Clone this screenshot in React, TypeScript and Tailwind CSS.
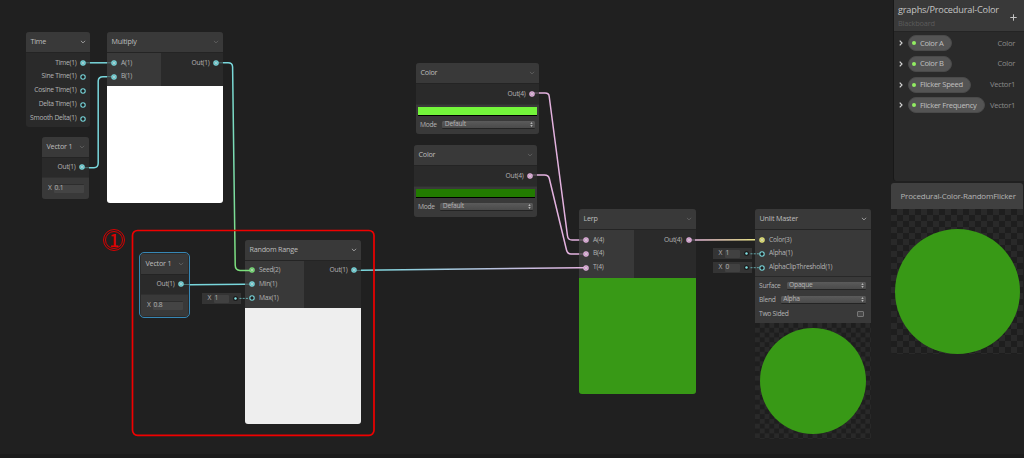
import React from "react";

type PortProps = { color: string; on?: boolean };

function Port({ color, on }: PortProps) {
  return (
    <svg className="h-[6px] w-[6px] shrink-0 overflow-visible" viewBox="0 0 6 6">
      <circle cx="3" cy="3" r="2.2" fill={on ? color : "#1c1c1c"} fillOpacity={on ? 0.75 : 1} stroke={color} strokeWidth="1.1" />
      {on && <circle cx="3" cy="3" r="1" fill="#fff" fillOpacity="0.55" />}
    </svg>
  );
}

function Chevron({ bright }: { bright?: boolean }) {
  return (
    <svg className="mt-[0.5px] h-[4px] w-[6px] shrink-0" viewBox="0 0 6 4" fill="none" stroke={bright ? "#a8a8a8" : "#626262"} strokeWidth="0.9">
      <path d="M0.9 0.8 L3 2.9 L5.1 0.8" />
    </svg>
  );
}

function Header({ title, bright }: { title: string; bright?: boolean }) {
  return (
    <div className="flex h-[21px] shrink-0 items-center justify-between border-b border-[#242424] bg-[#393939] pr-[4px] pl-[4.5px] text-[7.2px] tracking-[-0.22px] text-[#bdbdbd]">
      <span>{title}</span>
      <Chevron bright={bright} />
    </div>
  );
}

function Out({ label, color, on = true }: { label: string; color: string; on?: boolean }) {
  return (
    <div className="flex h-[13.9px] items-center justify-end gap-[3.5px] pr-[4px]">
      <span>{label}</span>
      <Port color={color} on={on} />
    </div>
  );
}

function In({ label, color, on = true }: { label: string; color: string; on?: boolean }) {
  return (
    <div className="flex h-[13.9px] items-center gap-[4.5px] pl-[3.5px]">
      <Port color={color} on={on} />
      <span>{label}</span>
    </div>
  );
}

function Node({ className, children }: { className: string; children: React.ReactNode }) {
  return (
    <div className={`absolute flex flex-col overflow-hidden rounded-[3px] bg-[#2a2a2a] text-[6.7px] leading-none tracking-[-0.26px] whitespace-nowrap text-[#b4b4b4] ${className}`}>
      {children}
    </div>
  );
}

function VectorBody({ value }: { value: string }) {
  return (
    <>
      <div className="flex h-[19px] shrink-0 flex-col justify-center">
        <Out label="Out(1)" color={TEAL} />
      </div>
      <div className="flex flex-1 items-center gap-[2px] border-t border-[#303030] bg-[#393939] pr-[5px] pb-[1px] pl-[6px]">
        <span>X</span>
        <span className="flex h-[9px] flex-1 items-center rounded-[1px] border-t border-[#2d2d2d] bg-[#444444] pl-[1px]">{value}</span>
      </div>
    </>
  );
}

function Select({ label }: { label: string }) {
  return (
    <div className="flex h-[8.5px] flex-1 items-center justify-between rounded-[1.5px] border-b border-[#242424] bg-linear-to-b from-[#5b5b5b] to-[#4a4a4a] pr-[2px] pl-[2.5px]">
      <span>{label}</span>
      <svg className="h-[5px] w-[3px]" viewBox="0 0 3 5" fill="#b8b8b8">
        <path d="M1.5 0 L2.7 2 H0.3 Z M1.5 5 L2.7 3 H0.3 Z" />
      </svg>
    </div>
  );
}

function ColorBody({ swatch }: { swatch: string }) {
  return (
    <>
      <div className="flex h-[20px] shrink-0 flex-col justify-center">
        <Out label="Out(4)" color={PINK} />
      </div>
      <div className="flex flex-1 flex-col border-t border-[#303030] bg-[#393939] px-[2px] pt-[2px]">
        <div className={`h-[9px] shrink-0 border-b-[1.5px] border-black ${swatch}`} />
        <div className="flex h-[18px] items-center gap-[5.5px] pr-[2.5px] pl-[2px]">
          <span>Mode</span>
          <Select label="Default" />
        </div>
      </div>
    </>
  );
}

function Inline({ className, value }: { className: string; value: string }) {
  return (
    <div className={`absolute flex h-[11px] w-[39px] items-center bg-[#343434] pr-[3.5px] pl-[5.5px] text-[6.7px] leading-none text-[#b4b4b4] ${className}`}>
      <span className="w-[6px]">X</span>
      <span className="flex h-[8px] w-[15px] items-center rounded-[1px] bg-[#414141] pl-[1px]">{value}</span>
      <svg className="ml-auto h-[5px] w-[5px]" viewBox="0 0 5 5">
        <circle cx="2.5" cy="2.5" r="2.5" fill="#1b1b1b" />
        <circle cx="2.5" cy="2.5" r="1.2" fill="#84e4e7" />
      </svg>
    </div>
  );
}

function Property({ name, type }: { name: string; type: string }) {
  return (
    <div className="flex h-[20.7px] items-center">
      <svg className="mr-[5px] h-[6px] w-[4px] shrink-0" viewBox="0 0 4 6" fill="none" stroke="#d0d0d0" strokeWidth="1.2">
        <path d="M0.7 0.6 L3 3 L0.7 5.4" />
      </svg>
      <span className="flex h-[16px] items-center gap-[4px] rounded-full border border-[#4a4a4a] bg-[#545454] pr-[7px] pl-[3.5px] text-[#c0c0c0]">
        <span className="h-[4px] w-[4px] rounded-full bg-[#92ee62]" />
        {name}
      </span>
      <span className="ml-auto text-[#8a8a8a]">{type}</span>
    </div>
  );
}

const TEAL = "#79d7dc";
const PINK = "#e3b2df";
const GREEN = "#7ce07c";
const YELLOW = "#e6e67a";

export default function App() {
  return (
    <div className="relative h-[458px] w-[1024px] overflow-hidden bg-[#202020] font-['Open_Sans','Noto_Sans',sans-serif]">
      <Node className="top-[32px] left-[26px] h-[95px] w-[64px]">
        <Header title="Time" bright />
        <div className="pt-[3px]">
          <Out label="Time(1)" color={TEAL} />
          <Out label="Sine Time(1)" color={TEAL} on={false} />
          <Out label="Cosine Time(1)" color={TEAL} on={false} />
          <Out label="Delta Time(1)" color={TEAL} on={false} />
          <Out label="Smooth Delta(1)" color={TEAL} on={false} />
        </div>
      </Node>

      <Node className="top-[32px] left-[107px] h-[171px] w-[116px]">
        <Header title="Multiply" />
        <div className="flex h-[33px] shrink-0">
          <div className="w-[54px] bg-[#393939] pt-[3px]">
            <In label="A(1)" color={TEAL} />
            <In label="B(1)" color={TEAL} />
          </div>
          <div className="flex-1 pt-[3px]"><Out label="Out(1)" color={TEAL} /></div>
        </div>
        <div className="flex-1 bg-white" />
      </Node>

      <Node className="top-[137px] left-[42px] h-[62px] w-[47px]">
        <Header title="Vector 1" />
        <VectorBody value="0.1" />
      </Node>

      <Node className="top-[252px] left-[139px] h-[66px] w-[51px] rounded-[5px]! border-[1.5px] border-[#3787b5] p-[1px]">
        <Header title="Vector 1" />
        <VectorBody value="0.8" />
      </Node>

      <Node className="top-[240px] left-[245px] h-[184px] w-[116px]">
        <Header title="Random Range" bright />
        <div className="flex h-[47px] shrink-0">
          <div className="w-[59px] bg-[#393939] pt-[2.5px]">
            <In label="Seed(2)" color={GREEN} />
            <In label="Min(1)" color={TEAL} />
            <In label="Max(1)" color={TEAL} on={false} />
          </div>
          <div className="flex-1 pt-[2.5px]"><Out label="Out(1)" color={TEAL} /></div>
        </div>
        <div className="flex-1 bg-[#eeeeee]" />
      </Node>

      <Node className="top-[63px] left-[416px] h-[71px] w-[123px]">
        <Header title="Color" />
        <ColorBody swatch="bg-[#74f53b]" />
      </Node>

      <Node className="top-[145px] left-[414px] h-[72px] w-[123px]">
        <Header title="Color" />
        <ColorBody swatch="bg-[#227b00]" />
      </Node>

      <Node className="top-[209px] left-[579px] h-[184.5px] w-[116.5px]">
        <Header title="Lerp" />
        <div className="flex h-[47.5px] shrink-0">
          <div className="w-[55px] bg-[#393939] pt-[3px]">
            <In label="A(4)" color={PINK} />
            <In label="B(4)" color={PINK} />
            <In label="T(4)" color={PINK} />
          </div>
          <div className="flex-1 pt-[3px]"><Out label="Out(4)" color={PINK} /></div>
        </div>
        <div className="flex-1 bg-[#389916]" />
      </Node>

      <Node className="top-[209px] left-[755px] h-[230px] w-[116px] rounded-b-none!">
        <Header title="Unlit Master" bright />
        <div className="h-[47px] shrink-0 border-b border-[#282828] bg-[#393939] pt-[3px]">
          <In label="Color(3)" color={YELLOW} />
          <In label="Alpha(1)" color={TEAL} on={false} />
          <In label="AlphaClipThreshold(1)" color={TEAL} on={false} />
        </div>
        <div className="flex h-[46px] shrink-0 flex-col bg-[#393939] pt-[2px] pr-[5px] pl-[4px]">
          <div className="flex h-[14px] items-center gap-[6px]"><span>Surface</span><Select label="Opaque" /></div>
          <div className="flex h-[14px] items-center gap-[5px]"><span>Blend</span><Select label="Alpha" /></div>
          <div className="flex h-[14px] items-center justify-between pr-[2px]">
            <span>Two Sided</span>
            <span className="h-[6.5px] w-[7px] rounded-[1px] border border-[#777777] bg-[#484848]" />
          </div>
        </div>
        <div className="flex flex-1 items-center justify-center bg-[repeating-conic-gradient(#292929_0_25%,#1e1e1e_0_50%)] bg-[length:9.6px_9.6px]">
          <div className="h-[106px] w-[106px] rounded-full bg-[#389916]" />
        </div>
      </Node>

      <Inline className="top-[293px] left-[202px]" value="1" />
      <Inline className="top-[248px] left-[713px]" value="1" />
      <Inline className="top-[262px] left-[713px]" value="0" />

      <svg className="absolute inset-0 h-[458px] w-[1024px]" fill="none" strokeWidth="1.5">
        <defs>
          <linearGradient id="seed" gradientUnits="userSpaceOnUse" x1="0" y1="62" x2="0" y2="270">
            <stop offset="0" stopColor={TEAL} />
            <stop offset="1" stopColor={GREEN} />
          </linearGradient>
          <linearGradient id="lerp" gradientUnits="userSpaceOnUse" x1="361" y1="0" x2="586" y2="0">
            <stop offset="0" stopColor={TEAL} />
            <stop offset="1" stopColor={PINK} />
          </linearGradient>
          <linearGradient id="master" gradientUnits="userSpaceOnUse" x1="690" y1="0" x2="762" y2="0">
            <stop offset="0" stopColor={PINK} />
            <stop offset="1" stopColor={YELLOW} />
          </linearGradient>
        </defs>
        <g stroke={TEAL}>
          <path d="M90 62.8 H107" />
          <path d="M89 167.7 H94 Q98.2 167.7 98.2 163 L98.2 81 Q98.4 76.7 103 76.7 H107" />
          <path d="M190 284.7 L245 284.2" />
          <path d="M83 62.8 H90 M107 62.8 H112 M107 76.7 H112 M82 167.7 H89 M216 62.8 H223 M181 284.5 H190 M245 284.2 H250 M354 270.4 H361" strokeWidth="0.7" strokeOpacity="0.6" />
          <path d="M239.5 298.4 H249 M750.5 253.8 H759 M750.5 267.7 H759" strokeWidth="0.9" strokeDasharray="2 1.2" strokeOpacity="0.8" />
        </g>
        <path stroke="url(#seed)" d="M223 62.8 H228 Q232.5 62.8 232.6 67 L235.2 265 Q235.3 270.4 240 270.4 H250" />
        <path stroke="url(#lerp)" d="M361 270.3 L579 267.8 H584" />
        <path stroke="url(#master)" d="M695 240 L755 239.7" />
        <g stroke={PINK}>
          <path d="M539 93 H545 Q549 93 549.2 96.5 L567.5 236 Q568 240 572 240 H579" />
          <path d="M537 175 H544.5 Q548.5 175 549.3 178.5 L566.5 250 Q567.5 254 571 254 H579" />
          <path d="M533 93 H539 M531 175 H537 M579 240 H584 M579 254 H584 M689 240 H695" strokeWidth="0.7" strokeOpacity="0.6" />
        </g>
        <rect x="132.5" y="230.5" width="241.5" height="204.8" rx="5" stroke="#f00000" strokeWidth="1.7" />
      </svg>

      <div className="absolute top-[229px] left-[103px] flex h-[22px] w-[22px] items-center justify-center rounded-full border-[3px] border-double border-[#d80000] pb-[2px] font-['Noto_Sans_CJK_JP',sans-serif] text-[17px] leading-none font-medium text-[#e00000]">
        1
      </div>

      <section className="absolute top-0 left-[893px] flex h-[180.5px] w-[131px] flex-col overflow-hidden rounded-bl-[3px] border-l border-[#181818] bg-[#2a2a2a] leading-none whitespace-nowrap">
        <header className="flex h-[32px] shrink-0 items-center justify-between border-b border-[#242424] bg-[#393939] pr-[7px] pl-[4px]">
          <div className="flex flex-col gap-[6px] pt-[2px]">
            <h1 className="text-[9.2px] tracking-[-0.2px] text-[#c4c4c4]">graphs/Procedural-Color</h1>
            <p className="text-[7.4px] tracking-[-0.2px] text-[#5b5b5b]">Blackboard</p>
          </div>
          <svg className="mt-[4px] h-[7px] w-[7px]" viewBox="0 0 7 7" stroke="#c4c4c4" strokeWidth="1">
            <path d="M3.5 0.3 V6.7 M0.3 3.5 H6.7" />
          </svg>
        </header>
        <div className="pt-[1px] pr-[9px] pl-[4.5px] text-[7.6px] tracking-[-0.3px]">
          <Property name="Color A" type="Color" />
          <Property name="Color B" type="Color" />
          <Property name="Flicker Speed" type="Vector1" />
          <Property name="Flicker Frequency" type="Vector1" />
        </div>
      </section>

      <section className="absolute top-[183px] left-[891px] flex h-[171px] w-[132px] flex-col overflow-hidden rounded-[3px] leading-none whitespace-nowrap">
        <h2 className="flex h-[26px] shrink-0 items-center bg-[#404040] pl-[9.5px] text-[8px] tracking-[-0.2px] text-[#b4b4b4]">Procedural-Color-RandomFlicker</h2>
        <div className="flex flex-1 items-end justify-center bg-[repeating-conic-gradient(#292929_0_25%,#1e1e1e_0_50%)] bg-[length:12px_12px] pb-[0.5px]">
          <div className="h-[125px] w-[125px] rounded-full bg-[#389916]" />
        </div>
      </section>
      <div className="absolute bottom-0 left-0 h-[4px] w-full bg-[#1b1b1b]" />
    </div>
  );
}
